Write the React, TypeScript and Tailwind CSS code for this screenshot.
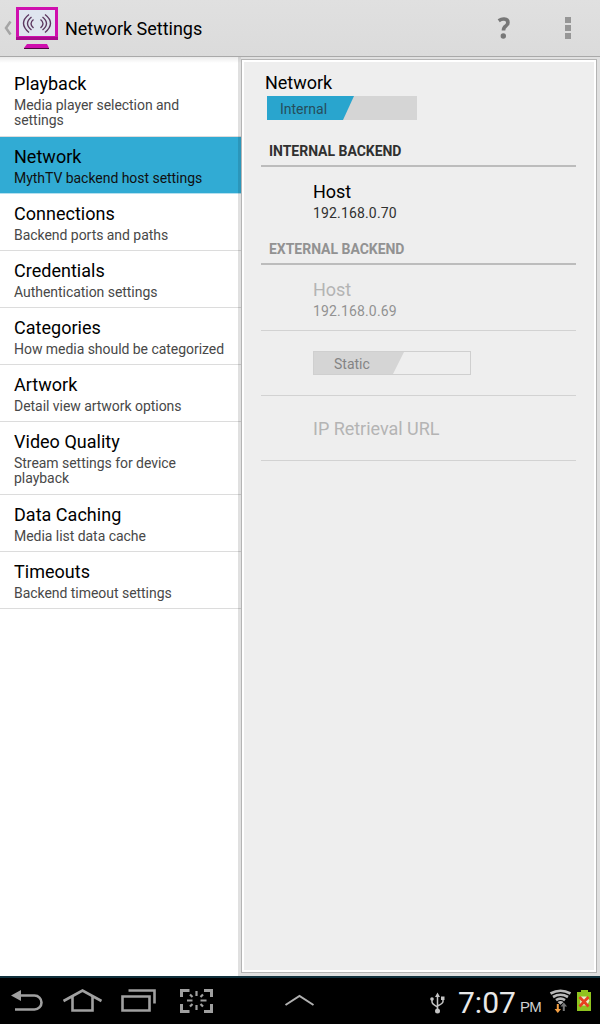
const items = [
  { title: 'Playback', sub: 'Media player selection and settings', tall: true },
  { title: 'Network', sub: 'MythTV backend host settings', active: true },
  { title: 'Connections', sub: 'Backend ports and paths' },
  { title: 'Credentials', sub: 'Authentication settings' },
  { title: 'Categories', sub: 'How media should be categorized' },
  { title: 'Artwork', sub: 'Detail view artwork options' },
  { title: 'Video Quality', sub: 'Stream settings for device playback', tall: true },
  { title: 'Data Caching', sub: 'Media list data cache' },
  { title: 'Timeouts', sub: 'Backend timeout settings' },
];

function Header() {
  return (
    <header className="flex h-[57px] shrink-0 items-start border-b border-[#a9a9a9] bg-linear-to-b from-[#e0e0e0] to-[#dbdbdb]">
      <svg className="h-14 w-[65px] shrink-0" viewBox="0 0 65 56" fill="none">
        <path d="M10.500 21.500L6 28l4.500 6.500" stroke="#a5a5a5" strokeWidth="2.500" />
        <rect x="17.500" y="8.500" width="39" height="29" fill="#dfe5ef" stroke="#cf0fae" strokeWidth="3" />
        <path d="M16 37h42v3H16z" fill="#a80b8d" />
        <path d="M27 44h20l2 4H24z" fill="#cf0fae" />
        <path d="M24 48h25v1H24z" fill="#4c063f" />
        <g stroke="#5d3860" strokeWidth="1.400">
          <path d="M29 14.500q-11 8.500 0 18M31.500 17q-8 6.500 0 13M33.500 19.500q-5 4 0 8.500" />
          <path d="M45 14.500q11 8.500 0 18M42.500 17q8 6.500 0 13M40.500 19.500q5 4 0 8.500" />
        </g>
      </svg>
      <h1 className="flex-1 pt-[17px] text-[18px] leading-6 tracking-[-0.02px]">Network Settings</h1>
      <svg className="mt-[16px] h-6 w-[16px]" viewBox="0 0 16 24" fill="none">
        <path d="M2.700 4.700Q5.500 2.800 8.200 3Q12 3.200 11.900 6.500Q11.900 8.700 9.600 10.200Q7.500 11.600 7.500 14.500" stroke="#777" strokeWidth="3.700" />
        <circle cx="7.300" cy="20" r="2.700" fill="#777" />
      </svg>
      <svg className="mt-[16px] mr-[25px] ml-[49px] h-6 w-[14px]" viewBox="0 0 14 24" fill="#969696">
        <path d="M4 1h6v6H4zM4 9h6v6H4zM4 17h6v6H4z" />
      </svg>
    </header>
  );
}

function Sidebar() {
  return (
    <nav className="relative w-[241px] shrink-0 bg-white pt-[7px]">
      {items.map((it) => (
        <div
          key={it.title}
          className={`border-b px-[14px] pt-[8px] ${it.tall ? 'h-[73px]' : 'h-[57px]'} ${
            it.active ? 'border-[#b4e0ef] bg-[#31abd4]' : 'border-[#dcdcdc]'
          }`}
        >
          <div className="text-[18px] leading-6 tracking-[0.02px]">{it.title}</div>
          <div className={`mt-[2px] text-[14px] leading-[15px] tracking-[-0.04px] ${it.active ? 'text-[#101010]' : 'text-[#484848]'}`}>
            {it.sub}
          </div>
        </div>
      ))}
      <div className="absolute inset-x-0 top-0 h-1.5 bg-linear-to-b from-black/8 to-transparent" />
      <div className="absolute inset-y-0 right-0 w-[3px] bg-black/12" />
    </nav>
  );
}

function Section({ title, disabled }: { title: string; disabled?: boolean }) {
  return (
    <h2
      className={`h-8 border-b-2 border-[#bcbcbc] pt-[6px] pl-2 text-[14px] leading-5 font-bold tracking-[-0.03px] ${
        disabled ? 'text-[#929292]' : 'text-[#303030]'
      }`}
    >
      {title}
    </h2>
  );
}

function Details() {
  return (
    <main className="mt-[2px] mr-[3px] mb-[3px] flex-1 border border-[#b4b4b4]">
      <div className="h-full border-2 border-white bg-[#eee] pt-[9px] pr-[18px] pl-[17px]">
        <div className="pl-1 text-[18px] leading-6 tracking-[-0.02px]">Network</div>
        <div className="mt-px ml-[6px] flex h-6 w-[150px] bg-[#d5d5d5]">
          <div className="w-[87px] bg-[#29a5ce] pl-[13px] text-[14px] leading-[27px] text-[#264d5b] [clip-path:polygon(0_0,100%_0,76px_100%,0_100%)]">
            Internal
          </div>
        </div>
        <div className="mt-[15px]">
          <Section title="INTERNAL BACKEND" />
        </div>
        <div className="h-[66px] pt-[13px] pl-[52px]">
          <div className="text-[18px] leading-6 tracking-[-0.02px]">Host</div>
          <div className="mt-px text-[14px] leading-[17px] tracking-[0.16px] text-[#303030]">192.168.0.70</div>
        </div>
        <Section title="EXTERNAL BACKEND" disabled />
        <div className="h-[66px] border-b border-[#d2d2d2] pt-[13px] pl-[52px]">
          <div className="text-[18px] leading-6 tracking-[-0.02px] text-[#b4b4b4]">Host</div>
          <div className="mt-px text-[14px] leading-[17px] tracking-[0.16px] text-[#929292]">192.168.0.69</div>
        </div>
        <div className="h-[65px] border-b border-[#d2d2d2] pt-[20px] pl-[52px]">
          <div className="h-6 w-[158px] border border-[#cfcfcf]">
            <div className="h-full w-[90px] bg-[#d5d5d5] pl-[20px] text-[14px] leading-[25px] text-[#848484] [clip-path:polygon(0_0,100%_0,79px_100%,0_100%)]">
              Static
            </div>
          </div>
        </div>
        <div className="h-[65px] border-b border-[#d2d2d2] pt-[21px] pl-[52px] text-[18px] leading-6 tracking-[-0.02px] text-[#b4b4b4]">
          IP Retrieval URL
        </div>
      </div>
    </main>
  );
}

function SystemBar() {
  return (
    <footer className="flex h-12 shrink-0 border-t-2 border-[#10303c] bg-black">
      <svg className="h-[46px] w-[230px]" viewBox="0 978 230 46" fill="none" stroke="#a0a0a0" strokeWidth="2.600">
        <path d="M19 995.500H34.500a6.800 6.800 0 0 1 0 14H15" />
        <path d="M11 995.500l10-5.500v11z" fill="#a0a0a0" stroke="none" />
        <path d="M63.500 1001l19-10.500 19 10.500M72.500 996.500v14h20v-14" />
        <path d="M122.500 996.500h27v14h-27zM128.500 990.500h26v13" />
        <path d="M181.500 997v-6.500h8M204 990.500h7.500v6.500M211.500 1004v7.500H204M189.500 1011.500h-8V1004" strokeWidth="3" />
        <path d="M196.500 991v5M196.500 1005v5M187 1000.500h5.500M200.500 1000.500h6M190 994.500l2.500 2.500M203 994.500l-2.500 2.500M190 1006.500l2.500-2.500M203 1006.500l-2.500-2.500" strokeWidth="2.200" />
      </svg>
      <svg className="ml-[50px] h-[46px] w-10" viewBox="280 978 40 46" fill="none" stroke="#b0b0b0" strokeWidth="2">
        <path d="M285.500 1005l14-9 14 9" />
      </svg>
      <svg className="ml-[104px] h-[46px] w-[34px]" viewBox="424 978 34 46" fill="none" stroke="#c4c4c4" strokeWidth="1.500">
        <path d="M437.500 1011v-16M432 999v3q0 2 5.500 5M443 999v2.500q0 2-5.500 4.500" />
        <path d="M435 997l2.500-4.500 2.500 4.500zM441 996.500h3.500v3.500H441z" fill="#c4c4c4" stroke="none" />
        <circle cx="432" cy="999" r="1.800" fill="#c4c4c4" stroke="none" />
        <circle cx="437.500" cy="1011" r="2.500" fill="#c4c4c4" stroke="none" />
      </svg>
      <div className="w-[62px] pt-[7px] text-[30px] leading-[36px] text-[#e8e8e8]">7:07</div>
      <div className="w-[29px] pt-[19px] font-['Liberation_Sans'] text-[15px] leading-5 tracking-[-0.8px] text-[#d0d0d0]">PM</div>
      <svg className="h-[46px] w-[51px] shrink-0" viewBox="549 978 51 46" fill="none">
        <g stroke="#b8b8b8" strokeWidth="2.700">
          <path d="M550.500 993.500q10-5.500 20 0M553 997q7.500-4.500 15 0M556 1000.200q4.500-3 9 0" />
        </g>
        <path d="M557.500 1002q3-2 6 0l-3 2.800z" fill="#b8b8b8" />
        <path d="M556.800 1004h2v5h2.200l-3.200 4-3.200-4h2.200z" fill="#f5a044" />
        <path d="M562.800 1011v-4.500h-2.300l3.300-4 3.300 4h-2.300v4.500z" fill="#777" />
        <path d="M577 992h4v-2h7v2h3v19h-14z" fill="#8fc31f" />
        <path d="M580.500 996.500h6l3 4-2.500 5h-7z" fill="#e8efcc" />
        <path d="M579.500 997l9 9.500M588.500 997l-9 9.500" stroke="#e64020" strokeWidth="2.800" />
      </svg>
    </footer>
  );
}

export default function App() {
  return (
    <div className="flex h-[1024px] w-[600px] flex-col overflow-hidden bg-[#e0e0e0] font-['Roboto',sans-serif] text-black">
      <Header />
      <div className="flex min-h-0 flex-1">
        <Sidebar />
        <Details />
      </div>
      <SystemBar />
    </div>
  );
}
